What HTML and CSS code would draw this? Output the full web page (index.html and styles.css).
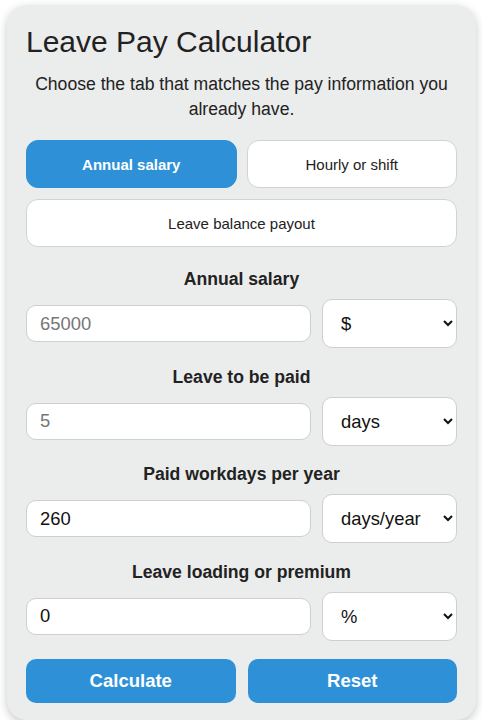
FILE: index.html
```html
<!DOCTYPE html>
<html lang="en">
<head>
<meta charset="UTF-8">
<meta name="viewport" content="width=device-width, initial-scale=1.0">
<title>Leave Pay Calculator</title>
<link rel="stylesheet" href="styles.css">
</head>
<body>
<div class="calculator">
  <h1>Leave Pay Calculator</h1>
  <p class="intro">Choose the tab that matches the pay information you already have.</p>

  <div class="tabs">
    <button class="tab active" type="button">Annual salary</button>
    <button class="tab" type="button">Hourly or shift</button>
    <button class="tab wide" type="button">Leave balance payout</button>
  </div>

  <form class="calc-form" onsubmit="return false;">
    <div class="field">
      <label for="salary">Annual salary</label>
      <div class="field-row">
        <input type="number" id="salary" placeholder="65000">
        <select id="salaryUnit">
          <option>$</option>
        </select>
      </div>
    </div>

    <div class="field">
      <label for="leave">Leave to be paid</label>
      <div class="field-row">
        <input type="number" id="leave" placeholder="5">
        <select id="leaveUnit">
          <option>days</option>
          <option>hours</option>
          <option>weeks</option>
        </select>
      </div>
    </div>

    <div class="field">
      <label for="workdays">Paid workdays per year</label>
      <div class="field-row">
        <input type="number" id="workdays" value="260">
        <select id="workdaysUnit">
          <option>days/year</option>
        </select>
      </div>
    </div>

    <div class="field">
      <label for="loading">Leave loading or premium</label>
      <div class="field-row">
        <input type="number" id="loading" value="0">
        <select id="loadingUnit">
          <option>%</option>
          <option>$</option>
        </select>
      </div>
    </div>

    <div class="actions">
      <button type="submit" class="btn">Calculate</button>
      <button type="reset" class="btn">Reset</button>
    </div>
  </form>
</div>
</body>
</html>
```

FILE: styles.css
```css
/* Page */
body {
  margin: 0;
  padding: 0;
  background-color: #fff;
  font-family: "Liberation Sans", Arial, sans-serif;
  color: #222;
}
.calculator {
  width: 469px;
  box-sizing: border-box;
  margin: 5px 0 0 7px;
  padding: 20px 19px 17px;
  background-color: #ebecec;
  border-radius: 20px;
  box-shadow: 0 3px 10px rgba(0, 0, 0, 0.22);
}
h1 {
  margin: 0 0 13px;
  font-size: 30px;
  font-weight: normal;
  color: #222;
}
.intro {
  margin: 0 0 18px;
  font-size: 17.6px;
  line-height: 25px;
  text-align: center;
}

/* Tabs */
.tabs {
  display: grid;
  grid-template-columns: 1fr 1fr;
  column-gap: 10px;
  row-gap: 11px;
  margin-bottom: 22px;
}
.tab {
  height: 48px;
  border: 1px solid #d2d2d2;
  border-radius: 12px;
  background-color: #fff;
  color: #222;
  font-family: inherit;
  font-size: 15px;
  cursor: pointer;
}
.tab.active {
  background-color: #2e91d8;
  border-color: #2e91d8;
  color: #fff;
  font-weight: bold;
}
.tab.wide {
  grid-column: 1 / 3;
}

/* Fields */
.field {
  margin-bottom: 18.5px;
}
.field label {
  display: block;
  margin-bottom: 9px;
  font-size: 17.6px;
  font-weight: bold;
  text-align: center;
}
.field-row {
  display: grid;
  grid-template-columns: 1fr 135px;
  column-gap: 11px;
  align-items: center;
}
.field-row input {
  box-sizing: border-box;
  width: 100%;
  height: 37px;
  padding: 7px 13px;
  border: 1px solid #cfcfcf;
  border-radius: 10px;
  background-color: #fff;
  font-family: inherit;
  font-size: 18.4px;
  color: #111;
}
.field-row input::placeholder {
  color: #777;
}
.field-row input::-webkit-outer-spin-button,
.field-row input::-webkit-inner-spin-button {
  -webkit-appearance: none;
  margin: 0;
}
.field-row select {
  box-sizing: border-box;
  width: 100%;
  height: 49px;
  padding: 0 8px 0 14px;
  border: 1px solid #cfcfcf;
  border-radius: 10px;
  background-color: #fff;
  font-family: inherit;
  font-size: 18.4px;
  color: #111;
}

/* Buttons */
.actions {
  display: grid;
  grid-template-columns: 1fr 1fr;
  column-gap: 12px;
}
.btn {
  height: 44px;
  border: none;
  border-radius: 10px;
  background-color: #2e91d8;
  color: #fff;
  font-family: inherit;
  font-size: 18.5px;
  font-weight: bold;
  cursor: pointer;
}
.btn:hover {
  background-color: #2580c2;
}
```
